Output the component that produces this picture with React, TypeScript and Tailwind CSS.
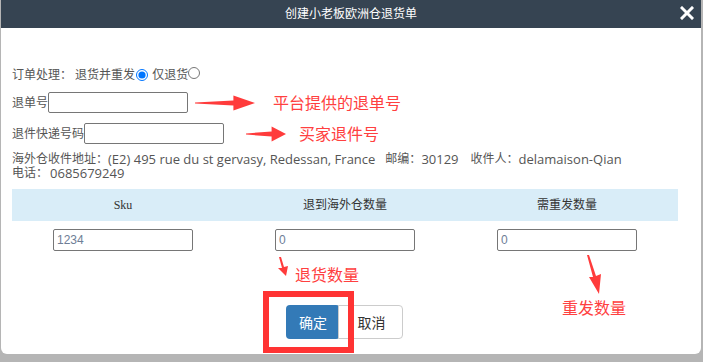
import React from "react";

const cjk = { fontFamily: '"Open Sans", "Noto Sans CJK SC", sans-serif' };

function RightArrow({ w }: { w: number }) {
  const head = w * 0.36;
  return (
    <svg width={w} height={16} viewBox={`0 0 ${w} 16`} className="shrink-0">
      <polygon
        points={`0,7.4 ${w - head},5.6 ${w - head},0.5 ${w},8 ${w - head},15.5 ${w - head},10.4 0,8.6`}
        fill="#ff3b3b"
      />
    </svg>
  );
}

export default function App() {
  return (
    <div className="h-[362px] w-[703px] overflow-hidden bg-[#b5b5b5] pl-[1px]" style={cjk}>
      <div className="relative h-[354px] w-[700px] overflow-hidden rounded-b-[6px] bg-white">
        <div className="relative flex h-[28px] items-center justify-center bg-[#364452]">
          <span className="text-[12px] text-white">创建小老板欧洲仓退货单</span>
          <svg width="14" height="14" viewBox="0 0 14 14" className="absolute right-[7px] top-[6px]">
            <path d="M2 2 L12 12 M12 2 L2 12" stroke="white" strokeWidth="3" strokeLinecap="square" />
          </svg>
        </div>

        <div className="px-[11px] pt-[38px] text-[12px] text-[#555]">
          <div className="flex h-[17px] items-center">
            <span>订单处理： 退货并重发</span>
            <input type="radio" name="t" defaultChecked className="m-0 ml-[1px] h-[12px] w-[12px]" />
            <span className="ml-[4px]">仅退货</span>
            <input type="radio" name="t" className="m-0 -mt-[4px] h-[12px] w-[12px]" />
          </div>

          <div className="mt-[9px] flex h-[21px] items-center">
            <span>退单号</span>
            <div className="h-[21px] w-[140px] rounded-[2px] border border-[#767676]" />
            <div className="ml-[7px]">
              <RightArrow w={60} />
            </div>
            <span className="ml-[18px] text-[16px] text-[#ff4040]">平台提供的退单号</span>
          </div>

          <div className="mt-[10px] flex h-[21px] items-center">
            <span>退件快递号码</span>
            <div className="h-[21px] w-[140px] rounded-[2px] border border-[#767676]" />
            <div className="ml-[22px]">
              <RightArrow w={40} />
            </div>
            <span className="ml-[13px] text-[16px] text-[#ff4040]">买家退件号</span>
          </div>

          <div className="mt-[8px] flex h-[14px] items-center whitespace-nowrap leading-[14px]">
            <span>海外仓收件地址：</span>
            <span className="text-[13px] leading-[14px]">(E2) 495 rue du st gervasy, Redessan, France</span>
            <span className="ml-[10px]">邮编：</span>
            <span className="text-[13px] leading-[14px]">30129</span>
            <span className="ml-[12px]">收件人：</span>
            <span className="text-[13px] leading-[14px]">delamaison-Qian</span>
          </div>
          <div className="flex h-[14px] items-center whitespace-nowrap leading-[14px]">
            <span>电话：</span>
            <span className="ml-[2px] text-[13px] leading-[14px]">0685679249</span>
          </div>

          <div className="mt-[9px] grid h-[32px] w-[666px] grid-cols-3 items-center bg-[#d9edf8] text-center text-[12px] text-[#333]">
            <span style={{ fontFamily: '"Liberation Serif", serif' }}>Sku</span>
            <span>退到海外仓数量</span>
            <span>需重发数量</span>
          </div>
          <div className="mt-[8px] grid w-[666px] grid-cols-3 justify-items-center">
            {["1234", "0", "0"].map((v, i) => (
              <div
                key={i}
                className="flex h-[22px] w-[140px] items-center rounded-[2px] border border-[#767676] px-[3px] text-[12px] text-[#6e7e96]"
                style={{ fontFamily: '"Liberation Sans Narrow", "Liberation Sans", sans-serif' }}
              >
                {v}
              </div>
            ))}
          </div>

          <div className="mt-[54px] ml-[274px] flex h-[34px]">
            <button className="h-[34px] w-[54px] rounded-[4px] bg-[#337ab7] text-[14px] text-white">确定</button>
            <button className="-ml-[2px] h-[34px] w-[65px] rounded-r-[4px] border border-[#cccccc] bg-white pl-[2px] text-[14px] text-[#333]">
              取消
            </button>
          </div>
        </div>

        {/* annotations */}
        <svg width="14" height="20" viewBox="0 0 14 20" className="absolute left-[275px] top-[257px]">
          <polygon points="3,0 6,11 2,11 10,19 12,9 8,10 5,0" fill="#ff3b3b" />
        </svg>
        <span className="absolute left-[294px] top-[264px] text-[16px] leading-[22px] text-[#ff4040]">退货数量</span>
        <svg width="18" height="40" viewBox="0 0 18 40" className="absolute left-[584px] top-[255px]">
          <polygon points="2,0 8,22 4,22 14,39 16,19 11,21 4,0" fill="#ff3b3b" />
        </svg>
        <span className="absolute left-[561px] top-[297px] text-[16px] leading-[22px] text-[#ff4040]">重发数量</span>
        <div className="absolute left-[262px] top-[291px] h-[62px] w-[91px] border-[6px] border-[#ff3333]" />
      </div>
    </div>
  );
}
